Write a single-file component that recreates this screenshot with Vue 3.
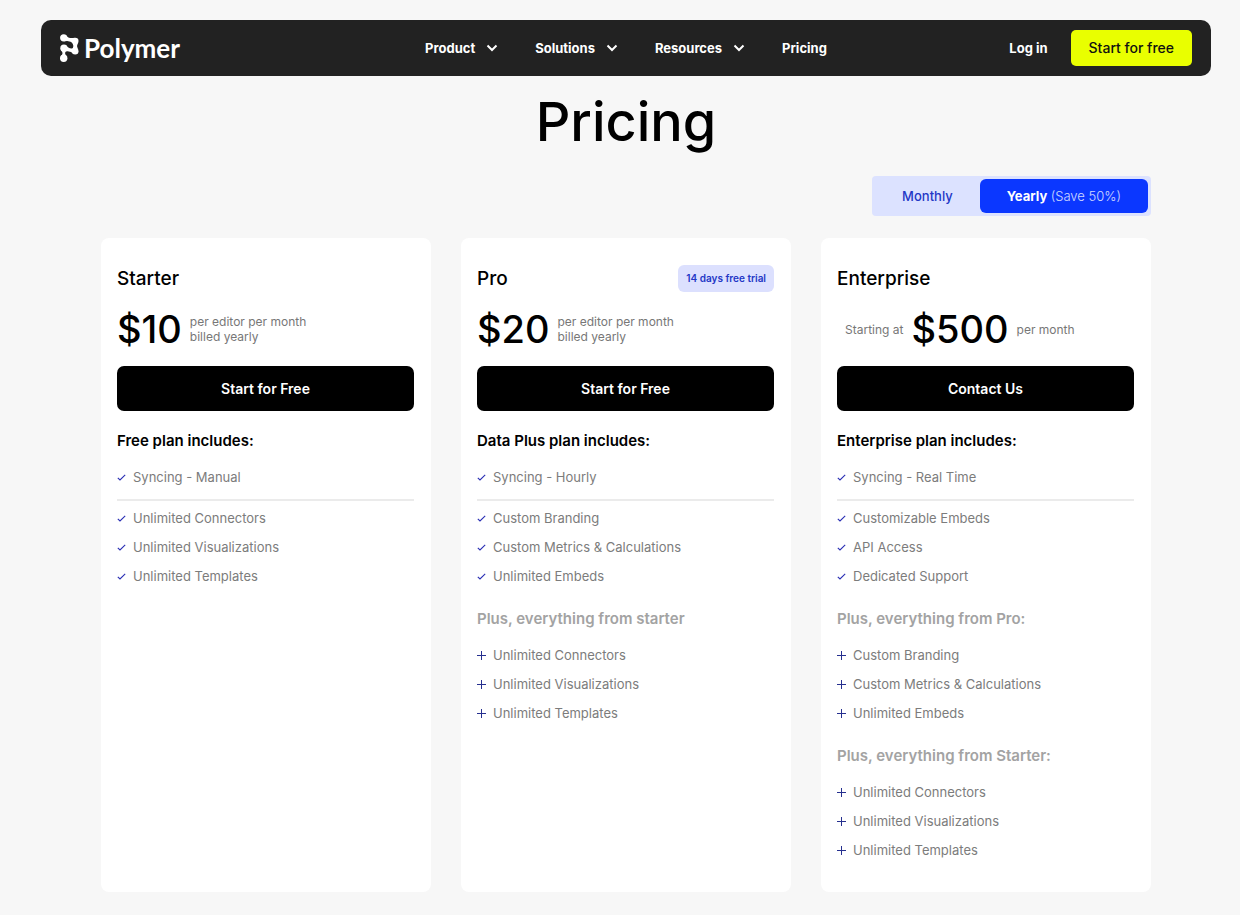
<script setup>
import { ref } from 'vue'

const billing = ref('yearly')

const menu = [
  { label: 'Product', sub: true },
  { label: 'Solutions', sub: true },
  { label: 'Resources', sub: true },
  { label: 'Pricing', sub: false },
]

const starterItems = ['Unlimited Connectors', 'Unlimited Visualizations', 'Unlimited Templates']
const proItems = ['Custom Branding', 'Custom Metrics & Calculations', 'Unlimited Embeds']

const plans = [
  {
    name: 'Starter',
    price: '$10',
    terms: ['per editor per month', 'billed yearly'],
    action: 'Start for Free',
    heading: 'Free plan includes:',
    sync: 'Syncing - Manual',
    items: starterItems,
    extras: [],
  },
  {
    name: 'Pro',
    badge: '14 days free trial',
    price: '$20',
    terms: ['per editor per month', 'billed yearly'],
    action: 'Start for Free',
    heading: 'Data Plus plan includes:',
    sync: 'Syncing - Hourly',
    items: proItems,
    extras: [{ title: 'Plus, everything from starter', items: starterItems }],
  },
  {
    name: 'Enterprise',
    prefix: 'Starting at',
    price: '$500',
    terms: ['per month'],
    action: 'Contact Us',
    heading: 'Enterprise plan includes:',
    sync: 'Syncing - Real Time',
    items: ['Customizable Embeds', 'API Access', 'Dedicated Support'],
    extras: [
      { title: 'Plus, everything from Pro:', items: proItems },
      { title: 'Plus, everything from Starter:', items: starterItems },
    ],
  },
]
</script>

<template>
  <div class="page">
    <header class="bar">
      <a class="brand" href="#">
        <svg width="20" height="28" viewBox="0 0 20 28" aria-hidden="true">
          <g fill="#fff">
            <circle cx="3.7" cy="3.8" r="3.6" />
            <circle cx="15.2" cy="7" r="3.3" />
            <circle cx="3.9" cy="14.2" r="3.6" />
            <circle cx="15.2" cy="17.2" r="3.3" />
            <circle cx="3.7" cy="24.2" r="3.7" />
            <path d="M6 1.200Q8.500 5 14.500 3.800L13.200 9.600Q10 5.800 4 7.300Z" />
            <path d="M12.500 9Q14.300 12 12.500 15.200H17.900Q16.100 12 17.900 9Z" />
            <path d="M6 11.300Q8.500 15.300 14 14.100L14 20.200Q10 16 5 17.600Z" />
            <path d="M1.300 16.600Q3.700 19.300 1.300 22H6.200Q4 19.300 6.300 16.600Z" />
          </g>
        </svg>
        <span>Polymer</span>
      </a>
      <nav class="menu" aria-label="Main">
        <template v-for="m in menu" :key="m.label">
          <button v-if="m.sub" type="button" class="menu-item">
            {{ m.label }}
            <svg width="12" height="8" viewBox="0 0 12 8" aria-hidden="true">
              <path d="M1.500 1.500L6 6L10.500 1.500" fill="none" stroke="#fff" stroke-width="2" />
            </svg>
          </button>
          <a v-else class="menu-item" href="#">{{ m.label }}</a>
        </template>
      </nav>
      <div class="account">
        <a class="login" href="#">Log in</a>
        <a class="signup" href="#">Start for free</a>
      </div>
    </header>

    <main class="content">
      <h1>Pricing</h1>
      <div class="toggle" role="group" aria-label="Billing period">
        <button type="button" :class="{ active: billing === 'monthly' }" :aria-pressed="billing === 'monthly'" @click="billing = 'monthly'">Monthly</button>
        <button type="button" :class="{ active: billing === 'yearly' }" :aria-pressed="billing === 'yearly'" @click="billing = 'yearly'"><b>Yearly</b> <span>(Save 50%)</span></button>
      </div>

      <div class="plans">
        <section v-for="p in plans" :key="p.name" class="card">
          <div class="card-head">
            <h2>{{ p.name }}</h2>
            <span v-if="p.badge" class="badge">{{ p.badge }}</span>
          </div>
          <div class="price-row">
            <span v-if="p.prefix" class="terms prefix">{{ p.prefix }}</span>
            <strong class="price">{{ p.price }}</strong>
            <span class="terms"><span v-for="t in p.terms" :key="t">{{ t }}</span></span>
          </div>
          <button type="button" class="action">{{ p.action }}</button>
          <h3>{{ p.heading }}</h3>
          <ul class="sync">
            <li>
              <svg width="9" height="9" viewBox="0 0 9 9" aria-hidden="true"><path d="M.8 4.800L3 7L8.200 1.800" fill="none" stroke="#2a2fb4" stroke-width="1.100" /></svg>
              {{ p.sync }}
            </li>
          </ul>
          <ul>
            <li v-for="i in p.items" :key="i">
              <svg width="9" height="9" viewBox="0 0 9 9" aria-hidden="true"><path d="M.8 4.800L3 7L8.200 1.800" fill="none" stroke="#2a2fb4" stroke-width="1.100" /></svg>
              {{ i }}
            </li>
          </ul>
          <template v-for="e in p.extras" :key="e.title">
            <h3 class="muted">{{ e.title }}</h3>
            <ul>
              <li v-for="i in e.items" :key="i">
                <svg width="9" height="9" viewBox="0 0 9 9" aria-hidden="true"><path d="M0 4.500H9M4.500 0V9" fill="none" stroke="#26308f" stroke-width="1" /></svg>
                {{ i }}
              </li>
            </ul>
          </template>
        </section>
      </div>
    </main>
  </div>
</template>

<style>
body {
  margin: 0;
  background: #f7f7f7;
}
</style>

<style scoped>
.page {
  padding: 20px 29px 23px 41px;
  font-family: Inter, "Liberation Sans", sans-serif;
  color: #000;
}
a {
  color: inherit;
  text-decoration: none;
}
button {
  font: inherit;
  color: inherit;
  border: 0;
  padding: 0;
  background: none;
  cursor: pointer;
}
h1, h2, h3, ul {
  margin: 0;
  padding: 0;
}
.bar {
  display: grid;
  grid-template-columns: 1fr auto 1fr;
  align-items: center;
  height: 56px;
  padding: 0 19px;
  border-radius: 10px;
  background: #222;
  color: #fff;
  font-size: 13px;
  font-weight: 700;
}
.brand {
  display: flex;
  align-items: center;
  gap: 4px;
  font-family: Lato, sans-serif;
  font-size: 26px;
  line-height: 28px;
  font-weight: 700;
}
.menu {
  display: flex;
  align-items: center;
  gap: 37px;
}
.menu-item {
  display: flex;
  align-items: center;
  gap: 11px;
}
.account {
  display: flex;
  align-items: center;
  justify-content: flex-end;
  gap: 23px;
}
.signup {
  padding: 0 18px;
  line-height: 36px;
  border-radius: 5px;
  background: #e9ff00;
  color: #111;
  font-size: 14px;
  font-weight: 500;
}
.content {
  display: flex;
  flex-direction: column;
  padding: 0 60px;
}
h1 {
  margin-top: 14px;
  text-align: center;
  font-size: 54px;
  line-height: 64px;
  font-weight: 500;
}
.toggle {
  display: flex;
  align-self: flex-end;
  margin-top: 22px;
  padding: 3px;
  border-radius: 4px;
  background: #dce2ff;
  color: #2337c6;
  font-size: 13px;
}
.toggle button {
  height: 34px;
  padding: 0 27px;
  border-radius: 6px;
  font-weight: 500;
}
.toggle .active {
  background: #0b37ff;
  color: #fff;
}
.toggle b {
  font-weight: 700;
}
.toggle span {
  font-weight: 300;
  opacity: 0.8;
}
.plans {
  display: grid;
  grid-template-columns: repeat(3, 1fr);
  gap: 30px;
  margin-top: 22px;
}
.card {
  padding: 27px 17px 27px 16px;
  border-radius: 8px;
  background: #fff;
}
.card-head {
  display: flex;
  align-items: center;
  justify-content: space-between;
  height: 27px;
}
h2 {
  font-size: 19px;
  font-weight: 500;
}
.badge {
  padding: 0 8px;
  line-height: 27px;
  border-radius: 6px;
  background: #dce0fe;
  color: #2337c6;
  font-size: 10px;
  font-weight: 600;
}
.price-row {
  display: flex;
  align-items: center;
  gap: 8px;
  height: 48px;
  margin-top: 13px;
}
.price {
  font-size: 38px;
  font-weight: 500;
}
.terms {
  display: flex;
  flex-direction: column;
  color: #777;
  font-size: 12px;
  line-height: 15px;
}
.prefix {
  padding-left: 8px;
}
.action {
  display: block;
  width: 100%;
  height: 45px;
  margin: 13px 0 18px;
  border-radius: 7px;
  background: #000;
  color: #fff;
  font-size: 14px;
  font-weight: 600;
}
h3 {
  font-size: 15px;
  line-height: 24px;
  font-weight: 600;
}
.muted {
  margin-top: 16px;
  color: #a3a3a3;
}
ul {
  margin-top: 10px;
  list-style: none;
  color: #7c7c7c;
  font-size: 13px;
  line-height: 29px;
}
li {
  display: flex;
  align-items: center;
  gap: 7px;
}
.sync {
  padding-bottom: 7px;
  border-bottom: 2px solid #ebebeb;
}
.sync + ul {
  margin-top: 3px;
}
</style>
